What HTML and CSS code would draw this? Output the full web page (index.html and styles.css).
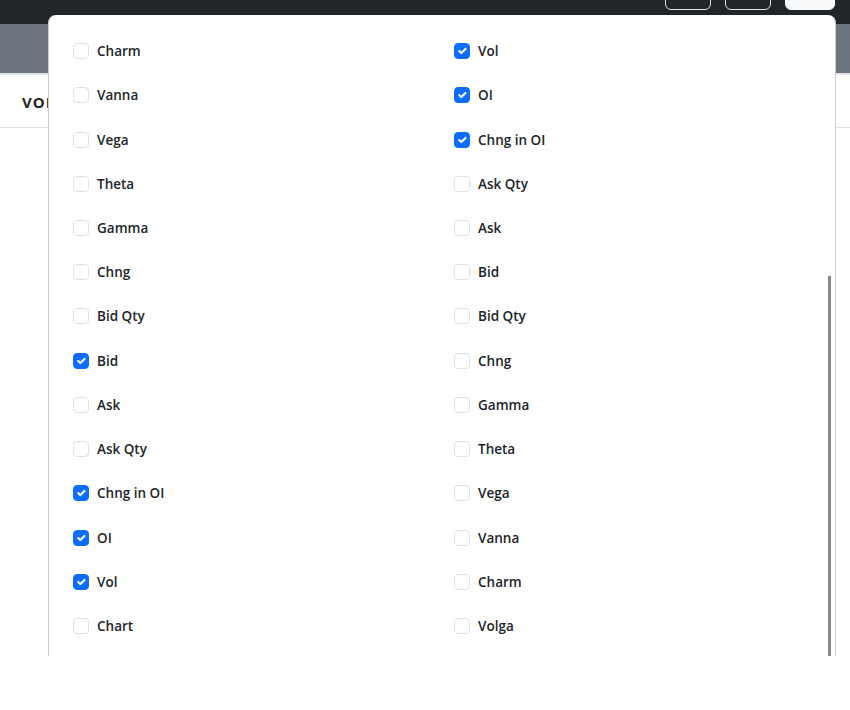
FILE: index.html
```html
<!DOCTYPE html>
<html lang="en">
<head>
<meta charset="utf-8">
<title>Columns</title>
<link rel="stylesheet" href="styles.css">
</head>
<body>
<header class="topbar">
  <div class="top-actions">
    <button class="btn-outline" type="button"></button>
    <button class="btn-outline" type="button"></button>
    <button class="btn-light" type="button"></button>
  </div>
</header>
<div class="subbar"></div>
<div class="tabrow"><span class="tab-title">VOLUME</span></div>

<div class="modal">
  <div class="modal-body">
    <div class="col-grid">
      <label class="opt"><span class="box"></span>Charm</label>
      <label class="opt"><span class="box on"><svg viewBox="0 0 20 20"><path d="m6 10 3 3 6-6"/></svg></span>Vol</label>
      <label class="opt"><span class="box"></span>Vanna</label>
      <label class="opt"><span class="box on"><svg viewBox="0 0 20 20"><path d="m6 10 3 3 6-6"/></svg></span>OI</label>
      <label class="opt"><span class="box"></span>Vega</label>
      <label class="opt"><span class="box on"><svg viewBox="0 0 20 20"><path d="m6 10 3 3 6-6"/></svg></span>Chng in OI</label>
      <label class="opt"><span class="box"></span>Theta</label>
      <label class="opt"><span class="box"></span>Ask Qty</label>
      <label class="opt"><span class="box"></span>Gamma</label>
      <label class="opt"><span class="box"></span>Ask</label>
      <label class="opt"><span class="box"></span>Chng</label>
      <label class="opt"><span class="box"></span>Bid</label>
      <label class="opt"><span class="box"></span>Bid Qty</label>
      <label class="opt"><span class="box"></span>Bid Qty</label>
      <label class="opt"><span class="box on"><svg viewBox="0 0 20 20"><path d="m6 10 3 3 6-6"/></svg></span>Bid</label>
      <label class="opt"><span class="box"></span>Chng</label>
      <label class="opt"><span class="box"></span>Ask</label>
      <label class="opt"><span class="box"></span>Gamma</label>
      <label class="opt"><span class="box"></span>Ask Qty</label>
      <label class="opt"><span class="box"></span>Theta</label>
      <label class="opt"><span class="box on"><svg viewBox="0 0 20 20"><path d="m6 10 3 3 6-6"/></svg></span>Chng in OI</label>
      <label class="opt"><span class="box"></span>Vega</label>
      <label class="opt"><span class="box on"><svg viewBox="0 0 20 20"><path d="m6 10 3 3 6-6"/></svg></span>OI</label>
      <label class="opt"><span class="box"></span>Vanna</label>
      <label class="opt"><span class="box on"><svg viewBox="0 0 20 20"><path d="m6 10 3 3 6-6"/></svg></span>Vol</label>
      <label class="opt"><span class="box"></span>Charm</label>
      <label class="opt"><span class="box"></span>Chart</label>
      <label class="opt"><span class="box"></span>Volga</label>
    </div>
  </div>
  <div class="scroll-thumb"></div>
</div>
</body>
</html>
```

FILE: styles.css
```css
* { box-sizing: border-box; }

html, body {
  margin: 0;
  padding: 0;
  background: #fff;
  font-family: "Open Sans", "Noto Sans", sans-serif;
  color: #212529;
}

.topbar {
  height: 24px;
  background: #212529;
  overflow: hidden;
}

.top-actions {
  display: flex;
  justify-content: flex-end;
  gap: 14px;
  padding-right: 15px;
  margin-top: -22px;
}

.btn-outline,
.btn-light {
  height: 32px;
  border-radius: 6px;
  padding: 0;
}

.btn-outline {
  width: 46px;
  background: transparent;
  border: 1px solid #dee2e6;
}

.btn-light {
  width: 50px;
  background: #f8f9fa;
  border: 1px solid #f8f9fa;
}

.subbar {
  height: 51px;
  background: #6c757d;
  border-bottom: 2px solid #dee2e6;
}

.tabrow {
  height: 53px;
  display: flex;
  align-items: center;
  padding-left: 22px;
  padding-top: 1px;
  border-bottom: 1px solid #dee2e6;
}

.tab-title {
  font-size: 15px;
  font-weight: 700;
  letter-spacing: 1px;
}

.modal {
  position: absolute;
  left: 48px;
  top: 15px;
  width: 788px;
  height: 641px;
  background: #fff;
  border: 1px solid #ccc;
  border-top: none;
  border-bottom: none;
  border-radius: 8px 8px 0 0;
  overflow: hidden;
}

.modal-body {
  padding: 14px 0 0 24px;
}

.col-grid {
  display: grid;
  grid-template-columns: 381px 381px;
  grid-auto-rows: 44.23px;
}

.opt {
  display: flex;
  align-items: center;
  gap: 8px;
  font-size: 13.5px;
  font-weight: 600;
  height: 44.23px;
}

.box {
  width: 16px;
  height: 16px;
  flex: 0 0 16px;
  border: 1px solid #dee2e6;
  border-radius: 4px;
  background: #fff;
  display: flex;
}

.box.on {
  background: #0d6efd;
  border-color: #0d6efd;
}

.box svg {
  width: 14px;
  height: 14px;
  fill: none;
  stroke: #fff;
  stroke-width: 3;
  stroke-linecap: round;
  stroke-linejoin: round;
}

.scroll-thumb {
  position: absolute;
  right: 4px;
  top: 261px;
  width: 3px;
  height: 380px;
  background: #888;
}
```
